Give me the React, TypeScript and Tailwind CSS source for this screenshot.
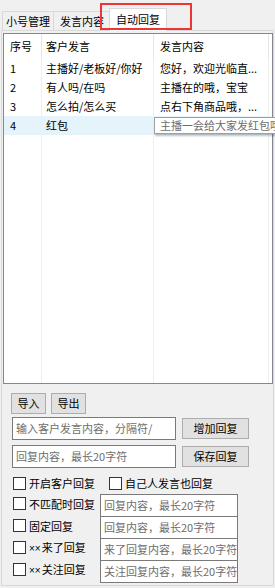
import React from "react";

const rows: [string, string, string][] = [
  ["1", "主播好/老板好/你好", "您好，欢迎光临直..."],
  ["2", "有人吗/在吗", "主播在的哦，宝宝"],
  ["3", "怎么拍/怎么买", "点右下角商品哦，..."],
  ["4", "红包", ""],
];

function Check({ label, prefix }: { label: string; prefix?: string }) {
  return (
    <div className="flex items-center gap-[3px]">
      <div className="w-[13px] h-[13px] border border-[#333333] bg-white" />
      <span className="leading-[14px] whitespace-nowrap">
        {prefix && <span className="font-['Liberation_Sans',sans-serif] text-[10px] mr-[1px]">{prefix}</span>}
        {label}
      </span>
    </div>
  );
}

function Btn({ label, w }: { label: string; w: string }) {
  return (
    <div className={`${w} h-[21px] flex items-center justify-center bg-[#e1e1e1] border border-[#adadad] leading-none`}>
      {label}
    </div>
  );
}

export default function App() {
  return (
    <div className="relative w-[275px] h-[588px] bg-[#f0f0f0] text-[11px] text-black font-['Microsoft_YaHei','Noto_Sans_CJK_SC',sans-serif] overflow-hidden">
      {/* tab strip */}
      <div className="h-[30px] flex items-end pl-[2px]">
        <div className="w-[52px] h-[19px] border border-b-0 border-[#d9d9d9] bg-[#f0f0f0] flex items-center justify-center">
          小号管理
        </div>
        <div className="w-[57px] h-[19px] border border-b-0 border-l-0 border-[#d9d9d9] bg-[#f0f0f0] flex items-center justify-center">
          发言内容
        </div>
        <div className="relative z-10 -ml-[2px] -mb-[1px] w-[58px] h-[23px] border border-b-0 border-[#d9d9d9] bg-white flex items-center justify-center pb-[1px]">
          自动回复
        </div>
      </div>
      {/* red annotation box */}
      <div className="absolute left-[100px] top-[3px] w-[92px] h-[27px] border-2 border-[#ee3535] z-20" />

      {/* tab panel */}
      <div className="ml-[1px] w-[273px] h-[556px] border border-[#d9d9d9] bg-[#f0f0f0] pt-[2px]">
        {/* list view */}
        <div className="ml-[1px] w-[270px] h-[351px] border border-[#828790] bg-white flex flex-col">
          <div className="flex h-[25px] shrink-0">
            <div className="w-[38px] border-r border-[#e5e5e5] pl-[6px] flex items-center">序号</div>
            <div className="w-[112px] border-r border-[#e5e5e5] pl-[4px] flex items-center">客户发言</div>
            <div className="w-[115px] border-r border-[#e5e5e5] pl-[6px] flex items-center">发言内容</div>
            <div className="flex-1" />
          </div>
          {rows.map((r, i) => {
            const sel = i === 3;
            return (
              <div key={i} className={`flex h-[19px] shrink-0 ${sel ? "bg-[#e5f3fb]" : ""}`}>
                <div className="w-[38px] border-r border-[#efefef] pl-[6px] flex items-center">{r[0]}</div>
                <div className="w-[112px] border-r border-[#efefef] pl-[4px] flex items-center whitespace-nowrap">{r[1]}</div>
                <div className="relative w-[115px] border-r border-[#efefef] pl-[6px] flex items-center whitespace-nowrap">
                  {r[2]}
                  {sel && (
                    <div className="absolute left-0 top-[1px] h-[17px] w-[140px] border border-[#a0a0a0] bg-white shadow-[1px_2px_2px_rgba(0,0,0,0.25)] pl-[5px] flex items-center text-[#6d6d6d] whitespace-nowrap overflow-hidden z-10">
                      主播一会给大家发红包哦
                    </div>
                  )}
                </div>
                <div className="flex-1" />
              </div>
            );
          })}
          <div className="flex flex-1">
            <div className="w-[38px] border-r border-[#efefef]" />
            <div className="w-[112px] border-r border-[#efefef]" />
            <div className="w-[115px] border-r border-[#efefef]" />
            <div className="flex-1" />
          </div>
        </div>

        {/* controls */}
        <div className="pl-[9px] pt-[9px]">
          <div className="flex gap-[5px]">
            <Btn label="导入" w="w-[35px]" />
            <Btn label="导出" w="w-[35px]" />
          </div>
          <div className="flex items-center gap-[6px] mt-[3px] pl-[1px]">
            <div className="w-[164px] h-[23px] border border-[#7a7a7a] bg-white pl-[3px] flex items-center text-[#6d6d6d]">
              输入客户发言内容，分隔符/
            </div>
            <Btn label="增加回复" w="w-[67px]" />
          </div>
          <div className="flex items-center gap-[6px] mt-[5px] pl-[1px]">
            <div className="w-[164px] h-[23px] border border-[#7a7a7a] bg-white pl-[3px] flex items-center text-[#6d6d6d]">
              回复内容，最长20字符
            </div>
            <Btn label="保存回复" w="w-[67px]" />
          </div>
          <div className="flex items-center mt-[8px] pl-[2px] h-[14px] gap-[14px]">
            <Check label="开启客户回复" />
            <Check label="自己人发言也回复" />
          </div>
          <div className="mt-[4px] flex flex-col">
            {[
              ["", "不匹配时回复", "回复内容，最长20字符"],
              ["", "固定回复", "回复内容，最长20字符"],
              ["××", "来了回复", "来了回复内容，最长20字符"],
              ["××", "关注回复", "关注回复内容，最长20字符"],
            ].map(([pre, l, p], i) => (
              <div key={i} className={`flex items-center ${i > 0 ? "-mt-[1px]" : ""}`}>
                <div className="w-[89px] pl-[2px] pb-[4px]">
                  <Check label={l} prefix={pre || undefined} />
                </div>
                <div className="w-[138px] h-[23px] border border-[#7a7a7a] bg-white pl-[3px] flex items-center text-[#6d6d6d] whitespace-nowrap">
                  {p}
                </div>
              </div>
            ))}
          </div>
        </div>
      </div>
    </div>
  );
}
